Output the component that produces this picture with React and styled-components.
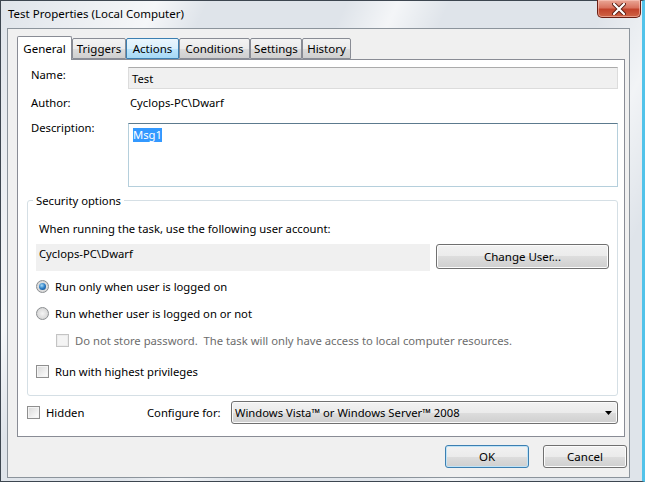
import styled, { createGlobalStyle } from 'styled-components';

const GlobalStyle = createGlobalStyle`
  body {
    margin: 0;
    font-family: "Noto Sans", "Open Sans", sans-serif;
    font-size: 11.25px;
    color: #000;
  }
`;

const Window = styled.div`
  width: 645px;
  height: 482px;
  box-sizing: border-box;
  display: flex;
  flex-direction: column;
  border: 1px solid #3d4650;
  border-right: 3px solid #52c3ea;
  background:
    linear-gradient(115deg, rgba(255, 255, 255, 0) 0%, rgba(255, 255, 255, 0.7) 18%, rgba(255, 255, 255, 0) 24%,
      rgba(255, 255, 255, 0) 40%, rgba(255, 255, 255, 0.65) 46%, rgba(255, 255, 255, 0) 52%,
      rgba(255, 255, 255, 0) 70%, rgba(255, 255, 255, 0.6) 78%, rgba(255, 255, 255, 0) 86%),
    #dfe4ea;
`;

const TitleBar = styled.div`
  height: 27px;
  display: flex;
  justify-content: space-between;
  align-items: flex-start;
`;

const Title = styled.div`
  line-height: 25px;
  padding-left: 7px;
  font-size: 11.5px;
`;

const CloseButton = styled.div`
  width: 44px;
  height: 18px;
  margin-top: -1px;
  margin-right: 1px;
  box-sizing: border-box;
  border: 1px solid #6b1f14;
  border-top: none;
  border-radius: 0 0 5px 5px;
  background: linear-gradient(#eaa797 0%, #d9735f 45%, #c2432c 55%, #cf6446 100%);
  box-shadow: inset 0 0 0 1px rgba(255, 210, 200, 0.5);
  display: flex;
  align-items: center;
  justify-content: center;
`;

const Client = styled.div`
  flex: 1;
  margin: 0 12px 3px 6px;
  border: 1px solid #8c949c;
  background: #f0f0f0;
  padding: 7px 4px 9px 9px;
  display: flex;
  flex-direction: column;
`;

const TabRow = styled.div`
  display: flex;
  align-items: flex-end;
  height: 23px;
  position: relative;
  z-index: 1;
`;

const Tab = styled.div`
  box-sizing: border-box;
  width: ${(p) => p.$w}px;
  height: ${(p) => (p.$selected ? 24 : 21)}px;
  margin-bottom: ${(p) => (p.$selected ? -1 : 0)}px;
  border: 1px solid ${(p) => (p.$hot ? '#3c7fb1' : '#898c95')};
  border-bottom: ${(p) => (p.$selected ? 'none' : undefined)};
  border-radius: 2px 2px 0 0;
  background: ${(p) =>
    p.$selected
      ? '#fff'
      : p.$hot
      ? 'linear-gradient(#eaf6fd 0%, #d9f0fc 50%, #bee6fd 50%, #a7d9f5 100%)'
      : 'linear-gradient(#f3f3f3 0%, #ebebeb 50%, #dddddd 50%, #cfcfcf 100%)'};
  display: flex;
  justify-content: center;
  align-items: ${(p) => (p.$selected ? 'flex-start' : 'center')};
  padding-top: ${(p) => (p.$selected ? 4 : 0)}px;
  font-size: 11.5px;
`;

const Panel = styled.div`
  flex: 1;
  border: 1px solid #898c95;
  background: #fff;
  padding: 0 6px 0 9px;
  display: flex;
  flex-direction: column;
`;

const FormRow = styled.div`
  display: flex;
  align-items: flex-start;
  margin-top: ${(p) => p.$top}px;
  margin-left: 4px;
`;

const Label = styled.div`
  width: 97px;
  flex-shrink: 0;
  line-height: 15px;
`;

const ReadOnlyField = styled.div`
  flex: 1;
  height: 22px;
  box-sizing: border-box;
  border: 1px solid #dcdcdc;
  border-top-color: #ababab;
  background: #f0f0f0;
  padding: 0 3px;
  display: flex;
  align-items: center;
`;

const PlainValue = styled.div`
  line-height: 15px;
  padding-left: 2px;
`;

const TextArea = styled.div`
  flex: 1;
  height: 64px;
  margin-top: 3px;
  box-sizing: border-box;
  border: 1px solid #b5cfdc;
  border-top-color: #5c7a8e;
  background: #fff;
  padding: 3px 4px;
`;

const Selection = styled.span`
  background: #3399ff;
  color: #fff;
  line-height: 14px;
  display: inline-block;
`;

const GroupBox = styled.fieldset`
  margin: 6px 0 0;
  min-width: 0;
  border: 1px solid #d5dfe5;
  border-radius: 3px;
  padding: 12px 8px 16px 8px;
`;

const Legend = styled.legend`
  padding: 0 3px;
  margin-left: -3px;
  line-height: 15px;
`;

const Text = styled.div`
  line-height: 15px;
  margin-left: ${(p) => p.$left || 0}px;
  margin-top: ${(p) => p.$top || 0}px;
`;

const AccountRow = styled.div`
  display: flex;
  gap: 6px;
  margin-top: 8px;
`;

const AccountField = styled.div`
  flex: 1;
  height: 27px;
  box-sizing: border-box;
  background: #f0f0f0;
  padding: 2px 3px;
  line-height: 15px;
`;

const Button = styled.div`
  box-sizing: border-box;
  width: ${(p) => p.$w}px;
  height: ${(p) => p.$h || 23}px;
  border: 1px solid ${(p) => (p.$default ? '#3c7fb1' : '#707070')};
  border-radius: 3px;
  background: linear-gradient(#f2f2f2 0%, #ebebeb 50%, #dddddd 50%, #cfcfcf 100%);
  box-shadow: inset 0 0 0 1px ${(p) => (p.$default ? '#bfe3f7' : '#fcfcfc')};
  display: flex;
  align-items: center;
  justify-content: center;
  font-size: 11.5px;
`;

const Option = styled.div`
  display: flex;
  align-items: center;
  gap: 6px;
  line-height: 15px;
  margin-top: ${(p) => p.$top || 0}px;
  margin-left: ${(p) => p.$left || 0}px;
  width: ${(p) => (p.$w ? `${p.$w}px` : 'auto')};
  flex-shrink: 0;
  color: ${(p) => (p.$disabled ? '#6d6d6d' : '#000')};
`;

const Radio = styled.span`
  width: 13px;
  height: 13px;
  box-sizing: border-box;
  border-radius: 50%;
  border: 1px solid #8b8e91;
  background: radial-gradient(circle at 50% 50%, #f4f4f4 0%, #dcdcdc 60%, #c9c9c9 100%);
  display: flex;
  align-items: center;
  justify-content: center;
  &::after {
    content: '';
    width: 7px;
    height: 7px;
    border-radius: 50%;
    display: ${(p) => (p.$checked ? 'block' : 'none')};
    background: radial-gradient(circle at 40% 35%, #a8dcf7 0%, #2b7cc4 50%, #0c3f78 100%);
  }
`;

const Check = styled.span`
  width: 13px;
  height: 13px;
  box-sizing: border-box;
  border: 1px solid ${(p) => (p.$disabled ? '#c4c4c4' : '#8f8f8f')};
  background: ${(p) =>
    p.$disabled ? '#f4f4f4' : 'linear-gradient(135deg, #d8d8d8 0%, #f0f0f0 60%, #ffffff 100%)'};
  box-shadow: inset 0 0 0 1px ${(p) => (p.$disabled ? '#ececec' : '#f4f4f4')};
`;

const BottomRow = styled.div`
  display: flex;
  align-items: center;
  height: 23px;
  margin-top: 5px;
`;

const ConfigLabel = styled.div`
  width: 84px;
  flex-shrink: 0;
`;

const Select = styled.div`
  flex: 1;
  height: 23px;
  box-sizing: border-box;
  border: 1px solid #707070;
  border-radius: 3px;
  background: linear-gradient(#f2f2f2 0%, #ebebeb 50%, #dddddd 50%, #cfcfcf 100%);
  box-shadow: inset 0 0 0 1px #fbfbfb;
  display: flex;
  align-items: center;
  justify-content: space-between;
  padding: 0 5px 0 3px;
`;

const ButtonRow = styled.div`
  display: flex;
  justify-content: flex-end;
  gap: 14px;
  margin-top: 8px;
  margin-right: -2px;
`;

export default function App() {
  return (
    <>
      <GlobalStyle />
      <Window>
        <TitleBar>
          <Title>Test Properties (Local Computer)</Title>
          <CloseButton>
            <svg width="14" height="12" viewBox="0 0 14 12">
              <path d="M2 1 L12 11 M12 1 L2 11" stroke="#5a1e14" strokeWidth="4" strokeLinecap="round" />
              <path d="M2 1 L12 11 M12 1 L2 11" stroke="#fff" strokeWidth="2.2" strokeLinecap="round" />
            </svg>
          </CloseButton>
        </TitleBar>
        <Client>
          <TabRow>
            <Tab $w={55} $selected>General</Tab>
            <Tab $w={54}>Triggers</Tab>
            <Tab $w={53} $hot>Actions</Tab>
            <Tab $w={71}>Conditions</Tab>
            <Tab $w={52}>Settings</Tab>
            <Tab $w={49}>History</Tab>
          </TabRow>
          <Panel>
            <FormRow $top={7}>
              <Label>Name:</Label>
              <ReadOnlyField>Test</ReadOnlyField>
            </FormRow>
            <FormRow $top={6}>
              <Label>Author:</Label>
              <PlainValue>Cyclops-PC\Dwarf</PlainValue>
            </FormRow>
            <FormRow $top={10}>
              <Label>Description:</Label>
              <TextArea>
                <Selection>Msg1</Selection>
              </TextArea>
            </FormRow>
            <GroupBox>
              <Legend>Security options</Legend>
              <Text $left={3} $top={1}>When running the task, use the following user account:</Text>
              <AccountRow>
                <AccountField>Cyclops-PC\Dwarf</AccountField>
                <Button $w={173} $h={25}>Change User...</Button>
              </AccountRow>
              <Option $top={8}>
                <Radio $checked />
                Run only when user is logged on
              </Option>
              <Option $top={12}>
                <Radio />
                Run whether user is logged on or not
              </Option>
              <Option $top={12} $left={20} $disabled>
                <Check $disabled />
                Do not store password.&nbsp; The task will only have access to local computer resources.
              </Option>
              <Option $top={16}>
                <Check />
                Run with highest privileges
              </Option>
            </GroupBox>
            <BottomRow>
              <Option $w={120}>
                <Check />
                Hidden
              </Option>
              <ConfigLabel>Configure for:</ConfigLabel>
              <Select>
                <span>Windows Vista™ or Windows Server™ 2008</span>
                <svg width="7" height="4" viewBox="0 0 7 4">
                  <path d="M0 0 H7 L3.5 4 Z" fill="#000" />
                </svg>
              </Select>
            </BottomRow>
          </Panel>
          <ButtonRow>
            <Button $w={84} $default>OK</Button>
            <Button $w={84}>Cancel</Button>
          </ButtonRow>
        </Client>
      </Window>
    </>
  );
}
